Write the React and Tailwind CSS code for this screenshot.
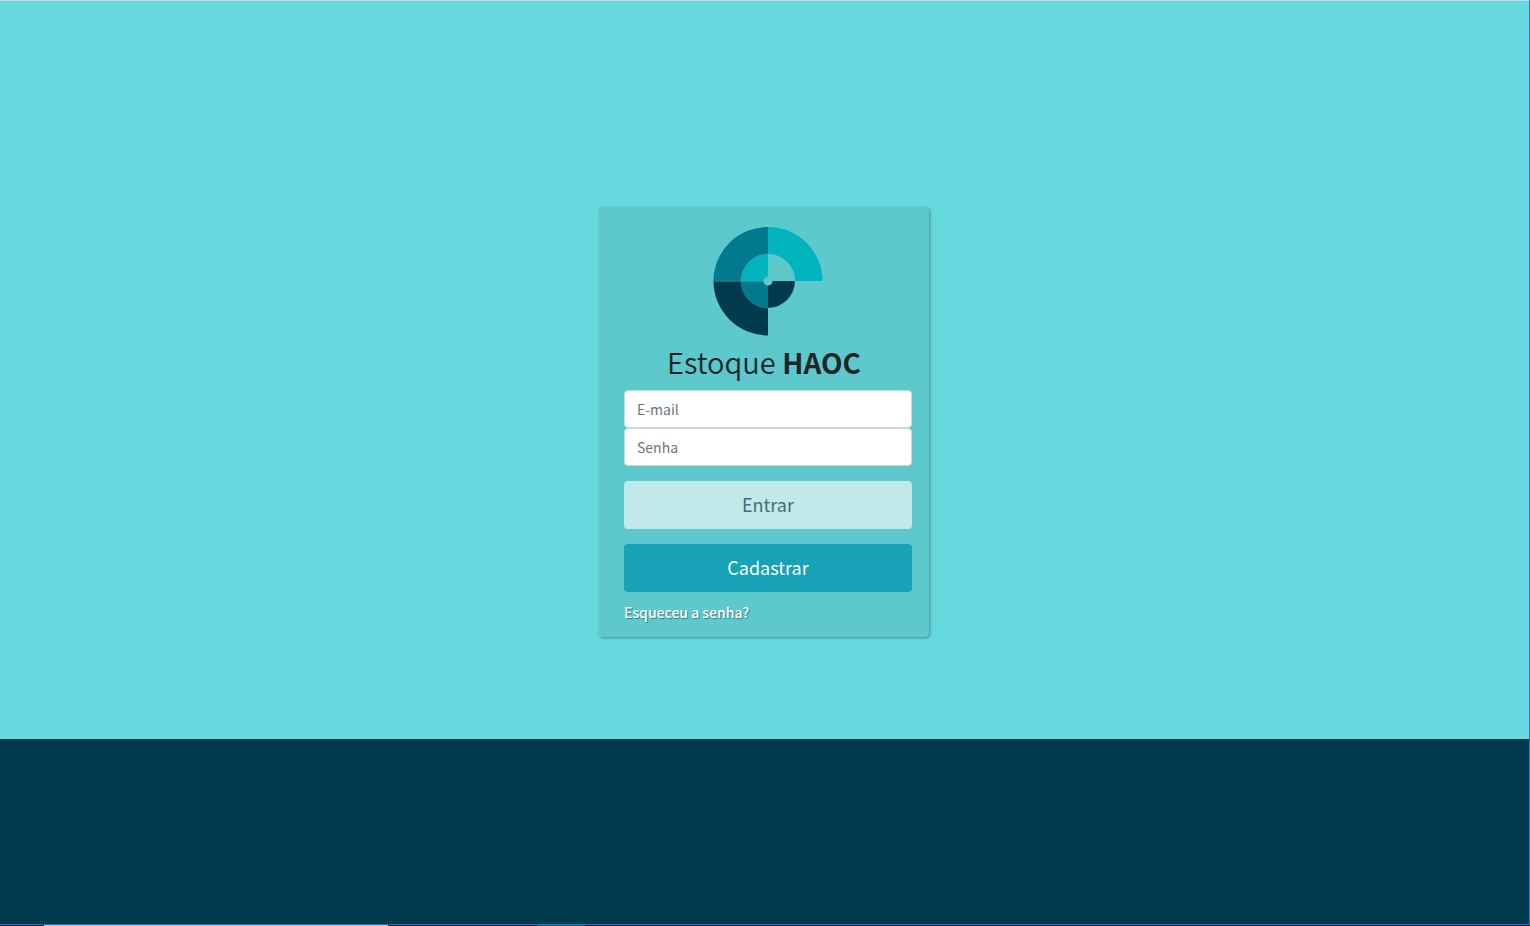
import React from "react";

function Logo() {
  return (
    <svg width="110" height="110" viewBox="-55 -55 110 110" role="img" aria-label="Estoque HAOC">
      <path d="M0 0V-54A54.5 54 0 0 0 -54.5 0Z" fill="#007a8c" />
      <path d="M0 0V-54A54.5 54 0 0 1 54.5 0Z" fill="#00b4be" />
      <path d="M0 0V54.5A54.5 54.5 0 0 1 -54.5 0Z" fill="#003a4d" />
      <path d="M0 0V-27A27 27 0 0 0 -27 0Z" fill="#00b4be" />
      <path d="M0 0V-27A27 27 0 0 1 27 0Z" fill="#5dc9cd" />
      <path d="M0 0V27A27 27 0 0 1 -27 0Z" fill="#007a8c" />
      <path d="M0 0V27A27 27 0 0 0 27 0Z" fill="#003a4d" />
      <path d="M-54.5 0.3H0" stroke="#5dc9cd" strokeOpacity="0.45" strokeWidth="0.9" />
      <circle r="27" fill="none" stroke="#5dc9cd" strokeOpacity="0.3" strokeWidth="0.8" />
      <circle r="4.5" fill="#5dc9cd" />
    </svg>
  );
}

const inputClass =
  "block h-[38px] w-full rounded border border-[#ced4da] bg-white px-3 text-sm text-[#495057] placeholder:text-[#6c757d] placeholder:opacity-100";
const buttonClass = "mt-[15px] h-12 w-full rounded pb-0.5 text-lg";

export default function App() {
  return (
    <div className="flex min-h-screen flex-col bg-[#003a4d] font-['Noto_Sans_CJK_JP','Noto_Sans',sans-serif]">
      <div className="flex flex-1 flex-col border-r border-[#1a7fd0]">
        <main className="flex justify-center border-t border-[#d5d9da] bg-[#65d9de] pt-[206px] pb-[102px]">
          <form
            className="mr-px w-[330px] rounded bg-[#5dc9cd] pt-[19px] pb-3 shadow-[1px_1px_3px_rgba(0,0,0,0.35)]"
            onSubmit={(e) => e.preventDefault()}
          >
            <div className="flex justify-center pl-2">
              <Logo />
            </div>
            <h1 className="mt-1.5 mb-[9px] text-center text-[29px] leading-[38px] font-[350] text-[#212529]">
              Estoque <b className="text-[28px] font-bold">HAOC</b>
            </h1>
            <div className="pr-[17px] pl-[25px]">
              <input type="email" aria-label="E-mail" placeholder="E-mail" className={inputClass} />
              <input type="password" aria-label="Senha" placeholder="Senha" className={inputClass} />
              <button type="submit" className={buttonClass + " bg-[#c1e9ea] text-[#416f73]"}>
                Entrar
              </button>
              <button type="button" className={buttonClass + " bg-[#17a2b8] text-white"}>
                Cadastrar
              </button>
              <a href="#senha" className="mt-2 mb-px block w-fit text-sm leading-6 font-medium text-white [text-shadow:1px_1px_1px_rgba(0,0,0,0.4)]">
                Esqueceu a senha?
              </a>
            </div>
          </form>
        </main>
      </div>
      <div className="flex h-0.5 border-t border-[#0f7ad8] bg-[#04162b]">
        <div className="ml-11 w-[344px] bg-[#b4c3cc]" />
        <div className="ml-[149px] w-12 bg-[#27506b]" />
      </div>
    </div>
  );
}
